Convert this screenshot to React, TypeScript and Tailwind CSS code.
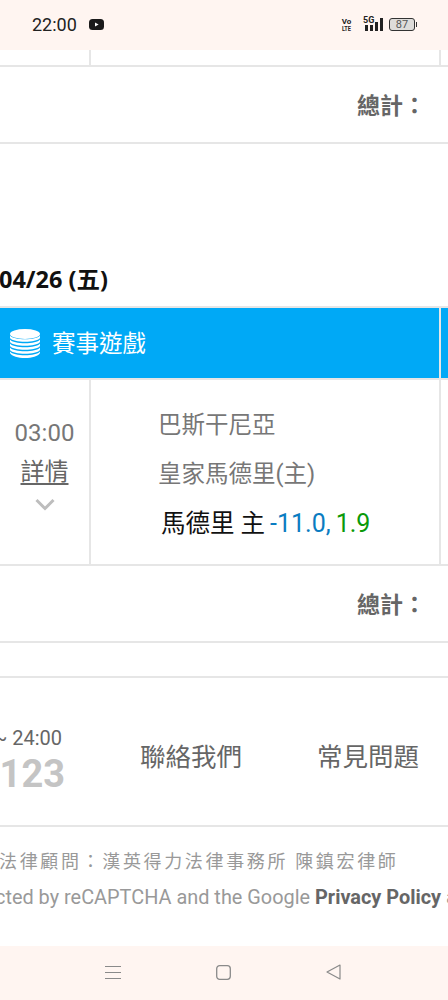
const cjk = "font-['Roboto','Noto_Sans_CJK_TC',sans-serif]";

function TotalRow({ height }: { height: string }) {
  return (
    <div className={`flex ${height} items-center justify-end border-b-2 border-[#e6e6e6] pr-[22px] pt-[3px]`}>
      <span className="text-[23px] leading-none font-bold text-[#666666]">總計：</span>
    </div>
  );
}

function StatusBar() {
  return (
    <div className="flex h-[50px] shrink-0 items-center bg-[#fff5f1] pb-[1px] pl-[32px] pr-[31px] text-[#222222]">
      <span className="text-[18px] leading-none font-['Roboto',sans-serif]">22:00</span>
      <svg className="ml-[12px]" width="15" height="11" viewBox="0 0 15 11">
        <rect width="15" height="11" rx="3.5" fill="#1a1a1a" />
        <path d="M6 3.4 L9.6 5.5 L6 7.6 Z" fill="#ffffff" />
      </svg>
      <div className="ml-auto flex items-center">
        <div className="flex w-[9px] flex-col items-center text-[8px] leading-[7px] font-bold font-['Roboto',sans-serif]">
          <span>Vo</span>
          <span className="scale-x-[0.7]">LTE</span>
        </div>
        <div className="relative ml-[14px] flex h-[13px] items-end gap-[2px]">
          <span className="absolute left-[-2px] top-[-2px] text-[9px] leading-[8px] font-bold font-['Roboto',sans-serif]">5G</span>
          <i className="h-[6px] w-[3px] bg-[#222222]" />
          <i className="h-[6px] w-[3px] bg-[#222222]" />
          <i className="h-[9px] w-[3px] bg-[#222222]" />
          <i className="h-[13px] w-[3px] bg-[#222222]" />
        </div>
        <div className="ml-[6px] flex items-center">
          <div className="flex h-[13px] w-[26px] items-center justify-center rounded-[3px] border border-[#333333] bg-[#dedcda] text-[11px] leading-none text-[#555555] font-['Roboto',sans-serif]">
            87
          </div>
          <i className="ml-[1px] h-[5px] w-[1px] bg-[#333333]" />
        </div>
      </div>
    </div>
  );
}

function NavBar() {
  return (
    <div className="flex h-[54px] shrink-0 items-center bg-[#fff5f1] pb-[2px] pl-[105px] text-[#8a8a8a]">
      <svg width="16" height="15" viewBox="0 0 16 15" fill="none" stroke="currentColor" strokeWidth="1.2">
        <path d="M0 1.5H16M0 7.5H16M0 13.5H16" />
      </svg>
      <svg className="ml-[95px]" width="15" height="15" viewBox="0 0 15 15" fill="none" stroke="currentColor" strokeWidth="1.3">
        <rect x="0.7" y="0.7" width="13.6" height="13.6" rx="3" />
      </svg>
      <svg className="ml-[95px]" width="15" height="16" viewBox="0 0 15 16" fill="none" stroke="currentColor" strokeWidth="1.2">
        <path d="M14 1 L1 8 L14 15 Z" strokeLinejoin="round" />
      </svg>
    </div>
  );
}

export default function App() {
  return (
    <div className={`flex h-[1000px] w-[448px] flex-col overflow-hidden bg-white ${cjk}`}>
      <StatusBar />

      {/* tail of the previous table */}
      <div className="flex h-[17px] shrink-0 border-b-2 border-[#e6e6e6]">
        <div className="w-[91px] border-r-2 border-[#e6e6e6]" />
        <div className="w-[350px] border-r-2 border-[#e6e6e6]" />
      </div>
      <TotalRow height="h-[77px]" />

      <div className="flex h-[162px] items-end pb-[13px]">
        <h2 className="ml-[-1px] text-[23.5px] leading-[28px] font-bold text-[#111111] font-['Open_Sans','Noto_Sans_CJK_TC',sans-serif]">
          04/26 (五)
        </h2>
      </div>

      {/* match table */}
      <div className="border-t-2 border-[#e6e6e6]">
        <div className="flex h-[72px] border-b-2 border-[#e6e6e6]">
          <div className="flex w-[439px] items-center gap-[12px] bg-[#00a9f6] pl-[10px] text-white">
            <svg width="30" height="29" viewBox="0 0 30 29" fill="#ffffff">
              <ellipse cx="15" cy="5" rx="15" ry="5" />
              <path d="M0 6.5C2 9 8 10.2 15 10.2S28 9 30 6.5V9C28 11.6 22 12.8 15 12.8S2 11.6 0 9Z" />
              <path d="M0 10.5C2 13 8 14.2 15 14.2S28 13 30 10.5V13C28 15.6 22 16.8 15 16.8S2 15.6 0 13Z" />
              <path d="M0 14.5C2 17 8 18.2 15 18.2S28 17 30 14.5V17C28 19.6 22 20.8 15 20.8S2 19.6 0 17Z" />
              <path d="M0 18.5C2 21 8 22.2 15 22.2S28 21 30 18.5V21C28 23.6 22 24.8 15 24.8S2 23.6 0 21Z" />
              <path d="M0 22.5C2 25 8 26.2 15 26.2S28 25 30 22.5V24C28 27.4 22 29 15 29S2 27.4 0 24Z" />
            </svg>
            <span className="mt-[4px] text-[23.5px] leading-none">賽事遊戲</span>
          </div>
          <div className="w-[2px] bg-[#e6e6e6]" />
          <div className="flex-1 bg-[#00a9f6]" />
        </div>

        <div className="flex h-[186px] border-b-2 border-[#e6e6e6]">
          <div className="flex w-[91px] flex-col items-center border-r-2 border-[#e6e6e6] pt-[39px] text-[#777777]">
            <span className="text-[24px] leading-[28px]">03:00</span>
            <a className="mt-[11px] text-[24px] leading-[28px] text-[#666666] underline underline-offset-[3px]">詳情</a>
            <svg className="mt-[12px]" width="20" height="13" viewBox="0 0 20 13" fill="none" stroke="#bdbdbd" strokeWidth="3">
              <path d="M1.5 2 L10 10.5 L18.5 2" />
            </svg>
          </div>
          <div className="w-[350px] border-r-2 border-[#e6e6e6] pl-[67px] pt-[29px]">
            <p className="text-[23.5px] leading-[32px] text-[#777777]">巴斯干尼亞</p>
            <p className="mt-[17px] text-[23.5px] leading-[32px] text-[#777777]">皇家馬德里(主)</p>
            <p className="ml-[3px] mt-[18px] flex items-baseline whitespace-nowrap text-[24.5px] leading-[32px] text-[#111111]">
              <span>馬德里 主</span>
              <span className="ml-[5px] text-[25px] text-[#0a7cc1]">-11.0,</span>
              <span className="ml-[5px] text-[25px] text-[#0a9a0a]">1.9</span>
            </p>
          </div>
        </div>
      </div>

      <TotalRow height="h-[77px]" />

      {/* footer links */}
      <div className="mt-[33px] flex h-[151px] shrink-0 items-center border-y-2 border-[#e6e6e6] pt-[12px]">
        <div className="flex w-[65px] shrink-0 flex-col items-end whitespace-nowrap pt-[6px]">
          <span className="pr-[3px] text-[20px] leading-[24px] text-[#666666]">~ 24:00</span>
          <span className="mt-[2px] text-[38px] leading-[44px] font-bold text-[#c4c4c4]">123</span>
        </div>
        <span className="ml-[75px] text-[25.5px] leading-none text-[#666666]">聯絡我們</span>
        <span className="ml-[75px] text-[25.5px] leading-none text-[#666666]">常見問題</span>
      </div>

      <div className="flex-1 overflow-hidden whitespace-nowrap pt-[22px] text-[#999999]">
        <p className="ml-[-1px] text-[18px] leading-[26px] tracking-[2.65px]">法律顧問：漢英得力法律事務所 陳鎮宏律師</p>
        <p className="ml-[-5px] mt-[10px] text-[19.9px] leading-[26px]">
          cted by reCAPTCHA and the Google <b className="text-[#666666]">Privacy Policy</b> a
        </p>
      </div>

      <NavBar />
    </div>
  );
}
